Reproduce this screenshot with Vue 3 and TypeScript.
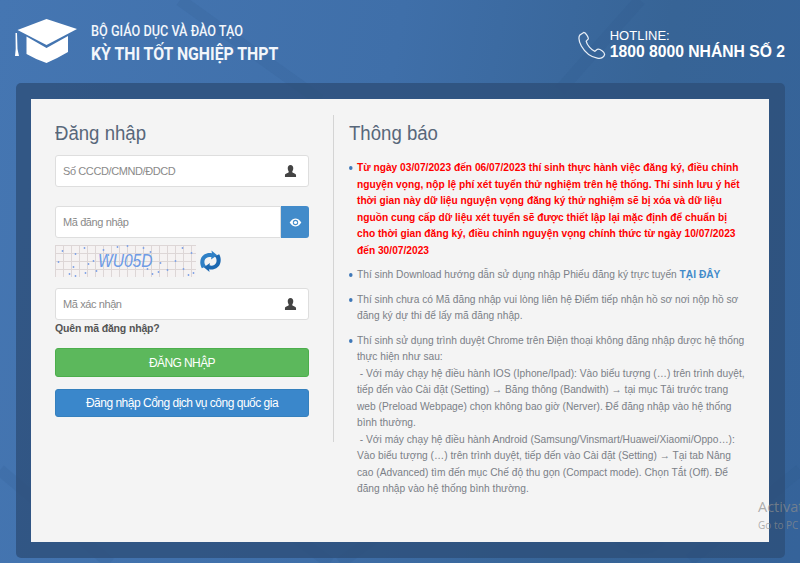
<script setup lang="ts">
interface Dot {
  x: number
  y: number
}

// captcha noise, roughly where it sits in the picture
const dots: Dot[] = [
  [7, 6], [20, 9], [29, 3], [38, 16], [48, 5], [53, 10], [62, 2], [72, 1], [88, 3], [95, 7],
  [127, 3], [136, 8], [3, 17], [18, 22], [33, 19], [41, 26], [14, 29], [20, 31], [30, 28],
  [92, 24], [97, 29], [103, 27], [112, 25], [120, 16], [128, 24], [133, 30], [138, 28], [105, 18]
].map(([x, y]) => ({ x, y }))
</script>

<template>
  <div class="page">
    <svg class="bg-lines" viewBox="0 0 800 563" aria-hidden="true">
      <path d="M0 470 L110 563 M150 430 L330 563 M340 563 L440 490 M620 500 A18 18 0 1 0 660 540" />
      <path d="M180 0 L320 100 M690 560 L800 470 M640 0 L560 90" />
    </svg>

    <header class="top">
      <div class="brand">
        <svg class="cap" viewBox="0 0 62 44" aria-hidden="true">
          <path d="M31.500 0 L62 10 L31.500 26 L2.500 11 Z" fill="#fff" />
          <path d="M11.500 17.500 L31.500 29 L53 17 L53 33 Q43 39 31.500 44 Q20 40 11.500 35 Z" fill="#fff" />
          <path d="M0.500 14 L2 14 L2.500 30 L4 37 L0 37 L0.700 30 Z" fill="#fff" />
        </svg>
        <div class="brand-text">
          <div class="brand-sub">BỘ GIÁO DỤC VÀ ĐÀO TẠO</div>
          <div class="brand-main">KỲ THI TỐT NGHIỆP THPT</div>
        </div>
      </div>
      <div class="hotline">
        <svg class="phone" viewBox="0 0 30 30" aria-hidden="true">
          <path d="M7 1.500 L3 4 C1 7 1.500 10 4.500 15.500 C8.500 22.500 15 27 21 28 C25 29 28 27 28.500 24.500 C29 22 23.500 18 21 19 L18.500 21 C15 20 10 14 9.500 10.500 L11.500 8.500 C12.500 7 9 1.500 7 1.500 Z" />
        </svg>
        <div>
          <div class="hot-label">HOTLINE:</div>
          <div class="hot-num">1800 8000 NHÁNH SỐ 2</div>
        </div>
      </div>
    </header>

    <main class="panel">
      <div class="card">
        <section class="login">
          <h2>Đăng nhập</h2>

          <div class="field first">
            <input type="text" placeholder="Số CCCD/CMND/ĐDCD" />
            <svg class="user" viewBox="0 0 14 13" aria-hidden="true">
              <path d="M7 0 C9 0 10 1.500 10 3.500 C10 5.500 9 6.500 8.800 7.500 C9 8.500 13 9 13 11 L13 13 L1 13 L1 11 C1 9 5 8.500 5.200 7.500 C5 6.500 4 5.500 4 3.500 C4 1.500 5 0 7 0 Z" />
            </svg>
          </div>

          <div class="field code">
            <input type="text" placeholder="Mã đăng nhập" />
            <button class="eye-btn" type="button" aria-label="Hiện mã">
              <svg viewBox="0 0 14 10" aria-hidden="true">
                <path fill-rule="evenodd" d="M0.500 5 C3 1.500 5 0.500 7 0.500 C9 0.500 11 1.500 13.500 5 C11 8.500 9 9.500 7 9.500 C5 9.500 3 8.500 0.500 5 Z M7 2 A3 3 0 1 0 7 8 A3 3 0 1 0 7 2 Z" />
                <circle cx="7" cy="5" r="1.800" />
              </svg>
            </button>
          </div>

          <div class="captcha-row">
            <div class="captcha">
              <svg class="noise" viewBox="0 0 140 32" aria-hidden="true">
                <circle v-for="(d, i) in dots" :key="i" :cx="d.x" :cy="d.y" r="0.900" />
              </svg>
              <span>WU05D</span>
            </div>
            <svg class="refresh" viewBox="0 0 24 24" aria-hidden="true">
              <path d="M3 19 C0 14 1 7 6 4.500 C9 3 11.500 3 13.500 3.500 L13 0.500 L19 5.500 L12.500 10 L13 7.500 C10 6.500 6.500 8 5.800 11 C5.300 13.500 6 15.500 7.500 17 Z" fill="#2f80c6" />
              <path d="M21 4.500 C24 9.500 23 16.500 18 19 C15 20.500 12.500 20.500 10.500 20 L11 23 L5 18 L11.500 13.500 L11 16 C14 17 17.500 15.500 18.200 12.500 C18.700 10 18 8 16.500 6.500 Z" fill="#1d69b2" />
            </svg>
          </div>

          <div class="field third">
            <input type="text" placeholder="Mã xác nhận" />
            <svg class="user" viewBox="0 0 14 13" aria-hidden="true">
              <path d="M7 0 C9 0 10 1.500 10 3.500 C10 5.500 9 6.500 8.800 7.500 C9 8.500 13 9 13 11 L13 13 L1 13 L1 11 C1 9 5 8.500 5.200 7.500 C5 6.500 4 5.500 4 3.500 C4 1.500 5 0 7 0 Z" />
            </svg>
          </div>

          <a class="forgot" href="#">Quên mã đăng nhập?</a>
          <button class="btn green" type="button">ĐĂNG NHẬP</button>
          <button class="btn blue" type="button">Đăng nhập Cổng dịch vụ công quốc gia</button>
        </section>

        <section class="notice">
          <h2>Thông báo</h2>
          <ul>
            <li class="red">Từ ngày 03/07/2023 đến 06/07/2023 thí sinh thực hành việc đăng ký, điều chỉnh nguyện vọng, nộp lệ phí xét tuyển thử nghiệm trên hệ thống. Thí sinh lưu ý hết thời gian này dữ liệu nguyện vọng đăng ký thử nghiệm sẽ bị xóa và dữ liệu nguồn cung cấp dữ liệu xét tuyển sẽ được thiết lập lại mặc định để chuẩn bị cho thời gian đăng ký, điều chỉnh nguyện vọng chính thức từ ngày 10/07/2023 đến 30/07/2023</li>
            <li>Thí sinh Download hướng dẫn sử dụng nhập Phiếu đăng ký trực tuyến <a href="#">TẠI ĐÂY</a></li>
            <li>Thí sinh chưa có Mã đăng nhập vui lòng liên hệ Điểm tiếp nhận hồ sơ nơi nộp hồ sơ đăng ký dự thi để lấy mã đăng nhập.</li>
            <li>Thí sinh sử dụng trình duyệt Chrome trên Điện thoại không đăng nhập được hệ thống thực hiện như sau:<br />
              &nbsp;- Với máy chạy hệ điều hành IOS (Iphone/Ipad): Vào biểu tượng (…) trên trình duyệt, tiếp đến vào Cài đặt (Setting) → Băng thông (Bandwith) → tại mục Tải trước trang web (Preload Webpage) chọn không bao giờ (Nerver). Để đăng nhập vào hệ thống bình thường.<br />
              &nbsp;- Với máy chạy hệ điều hành Android (Samsung/Vinsmart/Huawei/Xiaomi/Oppo…): Vào biểu tượng (…) trên trình duyệt, tiếp đến vào Cài đặt (Setting) → Tại tab Nâng cao (Advanced) tìm đến mục Chế độ thu gọn (Compact mode). Chọn Tắt (Off). Để đăng nhập vào hệ thống bình thường.</li>
          </ul>
        </section>
      </div>
    </main>

    <div class="activate">
      <div class="act-1">Activate Windows</div>
      <div class="act-2">Go to PC settings</div>
    </div>
  </div>
</template>

<style>
html,
body {
  margin: 0;
  overflow: hidden;
}
</style>

<style scoped>
.page {
  position: relative;
  width: 800px;
  height: 563px;
  overflow: hidden;
  box-sizing: border-box;
  padding-top: 1px;
  background: linear-gradient(100deg, #4576b2 0%, #3f6fa9 45%, #376496 75%, #35639a 100%);
  font-family: "Liberation Sans", Arial, sans-serif;
}

.bg-lines {
  position: absolute;
  inset: 0;
  width: 800px;
  height: 563px;
}

.bg-lines path {
  fill: none;
  stroke: rgba(40, 80, 130, 0.12);
  stroke-width: 12;
}

.top {
  position: relative;
  height: 82px;
  display: flex;
  justify-content: space-between;
  color: #fff;
}

.brand {
  display: flex;
  padding: 18px 0 0 15px;
}

.cap {
  width: 62px;
  height: 44px;
}

.brand-text {
  margin-left: 14px;
  font-family: Roboto, "Liberation Sans", sans-serif;
  color: #f2f6fb;
  transform: scaleX(0.905);
  transform-origin: left;
}

.brand-sub {
  margin-top: 3px;
  font-size: 14px;
  line-height: 18px;
  font-weight: 500;
  white-space: nowrap;
}

.brand-main {
  margin-top: 3px;
  font-size: 17.500px;
  line-height: 22px;
  font-weight: 700;
  white-space: nowrap;
}

.hotline {
  display: flex;
  padding: 27px 15px 0 0;
}

.phone {
  width: 29px;
  height: 29px;
  margin: 3px 4px 0 0;
  fill: none;
  stroke: #e8eef6;
  stroke-width: 1.300;
}

.hot-label {
  font-size: 13px;
  line-height: 15px;
}

.hot-num {
  font-size: 15.700px;
  line-height: 18px;
  font-weight: 700;
}

.panel {
  position: relative;
  margin: 0 15px 0 16px;
  height: 475px;
  box-sizing: border-box;
  padding: 16px 16px 16px 15px;
  border-radius: 5px;
  background: rgba(45, 78, 120, 0.78);
}

.card {
  height: 443px;
  display: flex;
  background: #f4f4f4;
}

.login {
  flex: 0 0 254px;
  margin: 16px 24px 0;
}

h2 {
  margin: 0;
  padding-top: 6px;
  font-size: 20px;
  line-height: 24px;
  font-weight: 400;
  color: #58677a;
  white-space: nowrap;
  transform: scaleX(0.93);
  transform-origin: left;
}

.field {
  position: relative;
  display: flex;
  height: 32px;
}

.field.first {
  margin-top: 10px;
}

.field.code {
  margin-top: 19px;
}

.field.third {
  margin-top: 11px;
}

input {
  flex: 1;
  min-width: 0;
  box-sizing: border-box;
  height: 32px;
  padding: 0 7px;
  border: 1px solid #dedede;
  border-radius: 3px;
  background: #fff;
  font: 11px "Liberation Sans", Arial, sans-serif;
  letter-spacing: -0.4px;
  outline: none;
}

input::placeholder {
  color: #8a8a8a;
  opacity: 1;
}

.code input {
  border-radius: 3px 0 0 3px;
}

.user {
  position: absolute;
  right: 12px;
  top: 10px;
  width: 13px;
  height: 12px;
  fill: #444;
}

.eye-btn {
  width: 28px;
  height: 32px;
  padding: 0;
  border: 0;
  border-radius: 0 3px 3px 0;
  background: #428bca;
}

.eye-btn svg {
  display: block;
  width: 13px;
  height: 9px;
  margin: auto;
  fill: #fff;
}

.captcha-row {
  display: flex;
  align-items: center;
  margin-top: 7px;
}

.captcha {
  position: relative;
  width: 141px;
  height: 32px;
  background-color: #f5f2f2;
  background-image:
    linear-gradient(#ddd6d6 1px, transparent 1px),
    linear-gradient(90deg, #ddd6d6 1px, transparent 1px);
  background-size: 8px 8px;
  text-align: center;
}

.noise {
  position: absolute;
  inset: 0;
  width: 100%;
  height: 100%;
}

.noise circle {
  fill: #7ba0e6;
}

.captcha span {
  position: relative;
  display: inline-block;
  font-size: 19px;
  line-height: 32px;
  font-style: italic;
  color: #6d9be6;
  transform: scaleX(0.82);
}

.refresh {
  width: 23px;
  height: 23px;
  margin-left: 3px;
}

.forgot {
  display: block;
  font-size: 10.500px;
  line-height: 16px;
  font-weight: 700;
  letter-spacing: -0.15px;
  color: #555;
  text-decoration: none;
}

.btn {
  display: block;
  width: 100%;
  border-radius: 3px;
  font: 12px "Liberation Sans", Arial, sans-serif;
  color: #fff;
}

.green {
  height: 29px;
  margin-top: 12px;
  background: #5cb85c;
  border: 1px solid #4cae4c;
  letter-spacing: -0.6px;
}

.blue {
  height: 28px;
  margin-top: 12px;
  background: #3a87cb;
  border: 1px solid #3580bd;
  letter-spacing: -0.5px;
}

.notice {
  flex: 1;
  min-width: 0;
  box-sizing: border-box;
  height: 327px;
  margin-top: 16px;
  padding-left: 15px;
  border-left: 1px solid #d4d4d4;
}

/* the source text is narrower than Liberation Sans at this height */
.notice ul {
  width: 447px;
  margin: 14px 0 0;
  padding: 0;
  list-style: none;
  font-size: 11.500px;
  line-height: 16.500px;
  color: #7b8087;
  transform: scaleX(0.887);
  transform-origin: left;
}

.notice li {
  position: relative;
  padding-left: 9px;
  margin-bottom: 8px;
}

.notice li::before {
  content: "";
  position: absolute;
  left: 0;
  top: 7px;
  width: 4px;
  height: 4px;
  border-radius: 50%;
  background: #3f78b8;
}

.notice li.red {
  font-weight: 700;
  color: #f00;
}

.notice a {
  font-weight: 700;
  color: #428bca;
  text-decoration: none;
}

.activate {
  position: absolute;
  left: 758px;
  top: 497px;
  white-space: nowrap;
  font-family: "Open Sans", sans-serif;
  color: rgba(140, 140, 140, 0.7);
}

.act-1 {
  font-size: 14.500px;
  line-height: 20px;
}

.act-2 {
  margin-top: 1px;
  font-size: 10px;
  line-height: 14px;
}
</style>
